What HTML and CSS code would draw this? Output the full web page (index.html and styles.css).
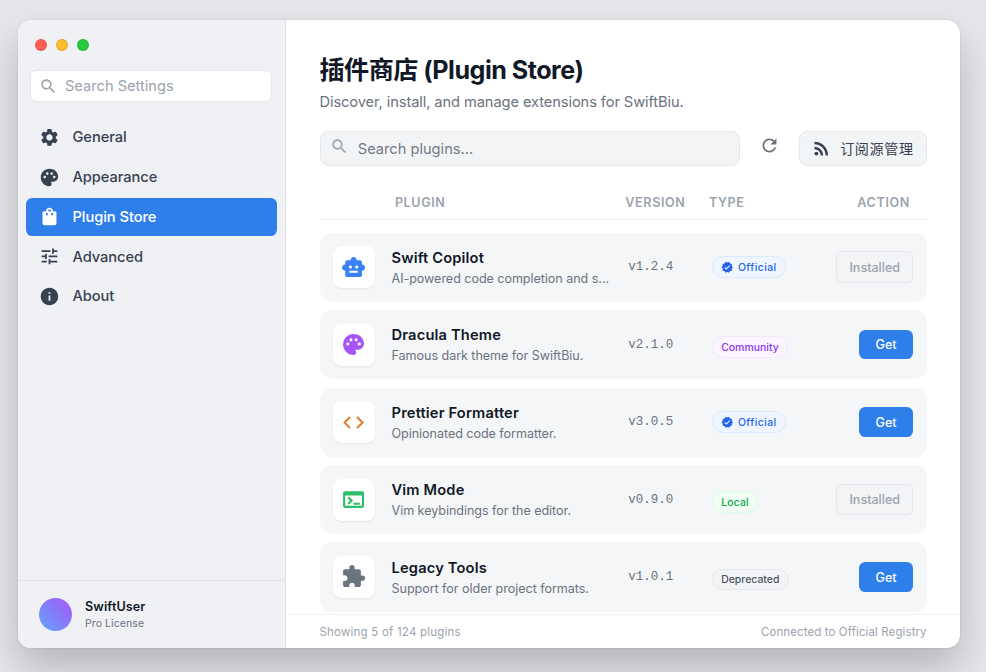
FILE: index.html
```
<!DOCTYPE html>
<html lang="zh-CN">
<head>
    <meta charset="UTF-8">
    <meta name="viewport" content="width=device-width, initial-scale=1.0">
    <title>Plugin Store</title>
    <link rel="stylesheet" href="styles.css">
</head>
<body>
<svg class="sprite">
    <symbol id="i-search" viewBox="0 0 24 24"><path d="M15.5 14h-.79l-.28-.27C15.41 12.59 16 11.11 16 9.5 16 5.91 13.09 3 9.5 3S3 5.91 3 9.5 5.91 16 9.5 16c1.61 0 3.09-.59 4.23-1.57l.27.28v.79l5 4.99L20.49 19l-4.99-5zm-6 0C7.01 14 5 11.99 5 9.5S7.01 5 9.5 5 14 7.01 14 9.5 11.99 14 9.5 14z"/></symbol>
    <symbol id="i-settings" viewBox="0 0 24 24"><path d="M19.14 12.94c.04-.3.06-.61.06-.94 0-.32-.02-.64-.07-.94l2.03-1.58c.18-.14.23-.41.12-.61l-1.92-3.32c-.12-.22-.37-.29-.59-.22l-2.39.96c-.5-.38-1.03-.7-1.62-.94l-.36-2.54c-.04-.24-.24-.41-.48-.41h-3.84c-.24 0-.43.17-.47.41l-.36 2.54c-.59.24-1.13.57-1.62.94l-2.39-.96c-.22-.08-.47 0-.59.22L2.74 8.87c-.12.21-.08.47.12.61l2.03 1.58c-.05.3-.09.63-.09.94s.02.64.07.94l-2.03 1.58c-.18.14-.23.41-.12.61l1.92 3.32c.12.22.37.29.59.22l2.39-.96c.5.38 1.03.7 1.62.94l.36 2.54c.05.24.24.41.48.41h3.84c.24 0 .44-.17.47-.41l.36-2.54c.59-.24 1.13-.56 1.62-.94l2.39.96c.22.08.47 0 .59-.22l1.92-3.32c.12-.22.07-.47-.12-.61l-2.01-1.58zM12 15.6c-1.98 0-3.6-1.62-3.6-3.6s1.62-3.6 3.6-3.6 3.6 1.62 3.6 3.6-1.62 3.6-3.6 3.6z"/></symbol>
    <symbol id="i-palette" viewBox="0 0 24 24"><path d="M12 2C6.49 2 2 6.49 2 12s4.49 10 10 10c1.38 0 2.5-1.12 2.5-2.5 0-.61-.23-1.2-.64-1.67-.08-.1-.13-.21-.13-.33 0-.28.22-.5.5-.5H16c3.31 0 6-2.69 6-6 0-4.96-4.49-9-10-9zm5.5 11c-.83 0-1.5-.67-1.5-1.5s.67-1.5 1.5-1.5 1.5.67 1.5 1.5-.67 1.5-1.5 1.5zm-3-4c-.83 0-1.5-.67-1.5-1.5S13.67 6 14.5 6s1.5.67 1.5 1.5S15.33 9 14.5 9zM5 11.5c0-.83.67-1.5 1.5-1.5s1.5.67 1.5 1.5S7.33 13 6.5 13 5 12.33 5 11.5zm6-4c0 .83-.67 1.5-1.5 1.5S8 8.33 8 7.5 8.67 6 9.5 6s1.5.67 1.5 1.5z"/></symbol>
    <symbol id="i-bag" viewBox="0 0 24 24"><path d="M18 6h-2c0-2.21-1.79-4-4-4S8 3.79 8 6H6c-1.1 0-2 .9-2 2v12c0 1.1.9 2 2 2h12c1.1 0 2-.9 2-2V8c0-1.1-.9-2-2-2zm-8 4c0 .55-.45 1-1 1s-1-.45-1-1V8h2v2zm2-6c1.1 0 2 .9 2 2h-4c0-1.1.9-2 2-2zm4 6c0 .55-.45 1-1 1s-1-.45-1-1V8h2v2z"/></symbol>
    <symbol id="i-tune" viewBox="0 0 24 24"><path d="M3 17v2h6v-2H3zM3 5v2h10V5H3zm10 16v-2h8v-2h-8v-2h-2v6h2zM7 9v2H3v2h4v2h2V9H7zm14 4v-2H11v2h10zm-6-4h2V7h4V5h-4V3h-2v6z"/></symbol>
    <symbol id="i-info" viewBox="0 0 24 24"><path d="M12 2C6.48 2 2 6.48 2 12s4.48 10 10 10 10-4.48 10-10S17.52 2 12 2zm1 15h-2v-6h2v6zm0-8h-2V7h2v2z"/></symbol>
    <symbol id="i-refresh" viewBox="0 0 24 24"><path d="M17.65 6.35C16.2 4.9 14.21 4 12 4c-4.42 0-7.99 3.58-7.99 8s3.57 8 7.99 8c3.73 0 6.84-2.55 7.73-6h-2.08c-.82 2.33-3.04 4-5.65 4-3.31 0-6-2.69-6-6s2.69-6 6-6c1.66 0 3.14.69 4.22 1.78L13 11h7V4l-2.35 2.35z"/></symbol>
    <symbol id="i-rss" viewBox="0 0 24 24"><circle cx="6.18" cy="17.82" r="2.18"/><path d="M4 4.44v2.83c7.03 0 12.73 5.7 12.73 12.73h2.83c0-8.59-6.97-15.56-15.56-15.56zm0 5.66v2.83c3.9 0 7.07 3.17 7.07 7.07h2.83c0-5.47-4.43-9.9-9.9-9.9z"/></symbol>
    <symbol id="i-robot" viewBox="0 0 24 24"><path fill-rule="evenodd" d="M20 9V7c0-1.1-.9-2-2-2h-3c0-1.66-1.34-3-3-3S9 3.34 9 5H6c-1.1 0-2 .9-2 2v2c-1.66 0-3 1.34-3 3s1.34 3 3 3v4c0 1.1.9 2 2 2h12c1.1 0 2-.9 2-2v-4c1.66 0 3-1.34 3-3s-1.34-3-3-3zM7.5 11.5c0-.83.67-1.5 1.5-1.5s1.5.67 1.5 1.5S9.83 13 9 13s-1.5-.67-1.5-1.5zM16 17H8v-2h8v2zm-1-4c-.83 0-1.5-.67-1.5-1.5S14.17 10 15 10s1.5.67 1.5 1.5S15.83 13 15 13z"/></symbol>
    <symbol id="i-verified" viewBox="0 0 24 24"><path d="M23 12l-2.44-2.79.34-3.69-3.61-.82-1.89-3.2L12 2.96 8.6 1.5 6.71 4.69 3.1 5.5l.34 3.7L1 12l2.44 2.79-.34 3.7 3.61.82L8.6 22.5l3.4-1.47 3.4 1.46 1.89-3.19 3.61-.82-.34-3.69L23 12zm-12.91 4.72l-3.8-3.81 1.48-1.48 2.32 2.33 5.85-5.87 1.48 1.48-7.33 7.35z"/></symbol>
    <symbol id="i-code" viewBox="0 0 24 24"><path d="M9.4 16.6L4.8 12l4.6-4.6L8 6l-6 6 6 6 1.4-1.4zm5.2 0l4.6-4.6-4.6-4.6L16 6l6 6-6 6-1.4-1.4z"/></symbol>
    <symbol id="i-terminal" viewBox="0 0 24 24"><path d="M20 4H4c-1.11 0-2 .9-2 2v12c0 1.1.89 2 2 2h16c1.1 0 2-.9 2-2V6c0-1.1-.89-2-2-2zm0 14H4V8h16v10zm-2-1h-6v-2h6v2zM7.5 17l-1.41-1.41L8.67 13l-2.59-2.59L7.5 9l4 4-4 4z"/></symbol>
    <symbol id="i-extension" viewBox="0 0 24 24"><path d="M20.5 11H19V7c0-1.1-.9-2-2-2h-4V3.5C13 2.12 11.88 1 10.5 1S8 2.12 8 3.5V5H4c-1.1 0-1.99.9-1.99 2v3.8H3.5c1.49 0 2.7 1.21 2.7 2.7s-1.21 2.7-2.7 2.7H2V20c0 1.1.9 2 2 2h3.8v-1.5c0-1.49 1.21-2.7 2.7-2.7 1.49 0 2.7 1.21 2.7 2.7V22H17c1.1 0 2-.9 2-2v-4h1.5c1.38 0 2.5-1.12 2.5-2.5S21.88 11 20.5 11z"/></symbol>
</svg>

<div class="window">
    <aside class="sidebar">
        <div class="titlebar">
            <span class="dot red"></span>
            <span class="dot yellow"></span>
            <span class="dot green"></span>
        </div>
        <label class="side-search">
            <svg class="icon"><use href="#i-search"/></svg>
            <input type="text" placeholder="Search Settings">
        </label>
        <nav class="nav">
            <a class="nav-item"><svg class="icon"><use href="#i-settings"/></svg>General</a>
            <a class="nav-item"><svg class="icon"><use href="#i-palette"/></svg>Appearance</a>
            <a class="nav-item active"><svg class="icon"><use href="#i-bag"/></svg>Plugin Store</a>
            <a class="nav-item"><svg class="icon"><use href="#i-tune"/></svg>Advanced</a>
            <a class="nav-item"><svg class="icon"><use href="#i-info"/></svg>About</a>
        </nav>
        <div class="user">
            <div class="avatar"></div>
            <div class="user-text">
                <div class="user-name">SwiftUser</div>
                <div class="user-plan">Pro License</div>
            </div>
        </div>
    </aside>

    <main class="main">
        <header class="header">
            <h1>插件商店 (Plugin Store)</h1>
            <p>Discover, install, and manage extensions for SwiftBiu.</p>
        </header>
        <div class="toolbar">
            <label class="search">
                <svg class="icon"><use href="#i-search"/></svg>
                <input type="text" placeholder="Search plugins...">
            </label>
            <button class="refresh"><svg class="icon"><use href="#i-refresh"/></svg></button>
            <button class="sources"><svg class="icon"><use href="#i-rss"/></svg><span>订阅源管理</span></button>
        </div>

        <div class="table-head">
            <span>Plugin</span>
            <span>Version</span>
            <span>Type</span>
            <span>Action</span>
        </div>

        <div class="list">
            <div class="row">
                <div class="tile blue"><svg class="icon"><use href="#i-robot"/></svg></div>
                <div class="info">
                    <div class="name">Swift Copilot</div>
                    <div class="desc">AI-powered code completion and s...</div>
                </div>
                <div class="version">v1.2.4</div>
                <div class="type"><span class="badge official"><svg class="icon"><use href="#i-verified"/></svg>Official</span></div>
                <button class="btn installed">Installed</button>
            </div>
            <div class="row">
                <div class="tile purple"><svg class="icon"><use href="#i-palette"/></svg></div>
                <div class="info">
                    <div class="name">Dracula Theme</div>
                    <div class="desc">Famous dark theme for SwiftBiu.</div>
                </div>
                <div class="version">v2.1.0</div>
                <div class="type low"><span class="badge community">Community</span></div>
                <button class="btn get">Get</button>
            </div>
            <div class="row">
                <div class="tile orange"><svg class="icon"><use href="#i-code"/></svg></div>
                <div class="info">
                    <div class="name">Prettier Formatter</div>
                    <div class="desc">Opinionated code formatter.</div>
                </div>
                <div class="version">v3.0.5</div>
                <div class="type"><span class="badge official"><svg class="icon"><use href="#i-verified"/></svg>Official</span></div>
                <button class="btn get">Get</button>
            </div>
            <div class="row">
                <div class="tile green-icon"><svg class="icon"><use href="#i-terminal"/></svg></div>
                <div class="info">
                    <div class="name">Vim Mode</div>
                    <div class="desc">Vim keybindings for the editor.</div>
                </div>
                <div class="version">v0.9.0</div>
                <div class="type low"><span class="badge local">Local</span></div>
                <button class="btn installed">Installed</button>
            </div>
            <div class="row">
                <div class="tile gray"><svg class="icon"><use href="#i-extension"/></svg></div>
                <div class="info">
                    <div class="name">Legacy Tools</div>
                    <div class="desc">Support for older project formats.</div>
                </div>
                <div class="version">v1.0.1</div>
                <div class="type low"><span class="badge deprecated">Deprecated</span></div>
                <button class="btn get">Get</button>
            </div>
        </div>

        <footer class="footer">
            <span class="count">Showing 5 of 124 plugins</span>
            <span>Connected to Official Registry</span>
        </footer>
    </main>
</div>
</body>
</html>
```
FILE: styles.css
```
html {
    font-size: 16.75px;
}

* {
    box-sizing: border-box;
}

body {
    margin: 0;
    height: 100vh;
    overflow: hidden;
    padding: 20px 0 0 18px;
    background: #e5e7eb;
    font-family: Inter, "Noto Sans CJK SC", sans-serif;
    color: #111827;
}

button, input {
    font-family: inherit;
    margin: 0;
}

.sprite {
    display: none;
}

.icon {
    display: block;
    flex: none;
    width: 1.25rem;
    height: 1.25rem;
    fill: currentColor;
}

.window {
    display: flex;
    width: 56.25rem;
    height: 37.5rem;
    border-radius: .75rem;
    overflow: hidden;
    background: #fff;
    box-shadow: 0 0 1px rgba(0, 0, 0, .35), 0 20px 40px rgba(0, 0, 0, .22);
}

/* sidebar */
.sidebar {
    width: 16rem;
    flex: none;
    display: flex;
    flex-direction: column;
    background: #f0f1f5;
    border-right: 1px solid #e1e3e8;
}

.titlebar {
    display: flex;
    align-items: center;
    gap: .5rem;
    height: 3rem;
    padding: 0 1rem;
}

.dot {
    width: .75rem;
    height: .75rem;
    border-radius: 50%;
    border: 1px solid rgba(0, 0, 0, .1);
}

.red { background: #ff5f57; }
.yellow { background: #febc2e; }
.green { background: #28c840; }

.side-search {
    display: flex;
    align-items: center;
    gap: .45rem;
    height: 1.875rem;
    margin: 0 .75rem 1rem .72rem;
    padding: 0 .45rem;
    border: 1px solid #e4e6ea;
    border-radius: .375rem;
    background: #fff;
    color: #9ca3af;
}

.side-search .icon, .search .icon {
    width: 1.125rem;
    height: 1.125rem;
}

.side-search input, .search input {
    flex: 1;
    min-width: 0;
    padding: 0;
    border: 0;
    outline: 0;
    background: none;
    font-size: .875rem;
}

.side-search input::placeholder {
    color: #9ca3af;
}

.nav {
    flex: 1;
    display: flex;
    flex-direction: column;
    gap: .125rem;
    padding: 0 .5rem;
}

.nav-item {
    display: flex;
    align-items: center;
    gap: .75rem;
    height: 2.25rem;
    padding: 0 .75rem;
    border-radius: .375rem;
    font-size: .875rem;
    font-weight: 500;
    letter-spacing: -.003em;
    color: #374151;
}

.nav-item.active {
    background: #2f7feb;
    color: #fff;
}

.user {
    display: flex;
    align-items: center;
    gap: .75rem;
    height: 4.0625rem;
    padding: 0 1.25rem;
    border-top: 1px solid #e1e3e8;
}

.avatar {
    width: 2rem;
    height: 2rem;
    border-radius: 50%;
    background: linear-gradient(45deg, #60a5fa, #a855f7);
}

.user-text {
    padding-top: 2px;
}

.user-name {
    font-size: .75rem;
    line-height: 1rem;
    font-weight: 600;
    letter-spacing: .01em;
}

.user-plan {
    font-size: .625rem;
    line-height: .9375rem;
    letter-spacing: .01em;
    color: #6b7280;
}

/* main */
.main {
    flex: 1;
    min-width: 0;
    display: flex;
    flex-direction: column;
}

.header {
    padding: 2rem 2rem 0;
}

.header h1 {
    margin: 0 0 .3rem;
    font-size: 1.5rem;
    line-height: 2rem;
    font-weight: 700;
    letter-spacing: -.02em;
}

.header p {
    margin: 0;
    font-size: .875rem;
    line-height: 1.25rem;
    letter-spacing: -.006em;
    color: #6b7280;
}

.toolbar {
    display: flex;
    margin: 1.07rem 2rem 0;
}

.search {
    flex: 1;
    display: flex;
    align-items: center;
    gap: .55rem;
    height: 2.125rem;
    padding: 0 .55rem;
    border: 1px solid #e5e7eb;
    border-radius: .5rem;
    background: #f3f4f6;
    color: #9ca3af;
}

.search .icon {
    margin-bottom: .25rem;
}

.search input::placeholder {
    color: #757b87;
}

.refresh {
    width: 3.53rem;
    padding: 0 0 .375rem;
    border: 0;
    background: none;
    color: #6b7280;
}

.refresh .icon {
    margin: 0 auto;
}

.sources {
    display: flex;
    align-items: center;
    gap: .5rem;
    height: 2.125rem;
    padding: 0 .72rem 0 .64rem;
    border: 1px solid #e5e7eb;
    border-radius: .5rem;
    background: #f3f4f6;
    font-size: .84rem;
    font-weight: 400;
    letter-spacing: .045em;
    color: #374151;
}

.sources span {
    padding-bottom: 2px;
}

.table-head, .row {
    display: grid;
    align-items: center;
}

.table-head {
    grid-template-columns: 13.76rem 4.99rem 1fr auto;
    height: 2.25rem;
    margin: .97rem 2rem 0;
    padding: 2px 1rem 0 4.5rem;
    border-bottom: 1px solid #f0f1f4;
    font-size: .75rem;
    font-weight: 600;
    letter-spacing: .05em;
    text-transform: uppercase;
    color: #9ca3af;
}

.list {
    flex: 1;
    min-height: 0;
    overflow: hidden;
    display: flex;
    flex-direction: column;
    gap: .5rem;
    padding: .73rem 2rem 0;
}

.row {
    grid-template-columns: 3.5rem 14.13rem 4.99rem 1fr auto;
    flex: none;
    height: 4.125rem;
    padding: 0 .8rem;
    border-radius: .75rem;
    background: #f5f6f8;
}

.tile {
    display: flex;
    align-items: center;
    justify-content: center;
    width: 2.5rem;
    height: 2.5rem;
    border-radius: .5rem;
    background: #fff;
    box-shadow: 0 1px 2px rgba(0, 0, 0, .07);
}

.tile .icon {
    width: 1.5rem;
    height: 1.5rem;
}

.blue { color: #3b82f6; }
.purple { color: #a855f7; }
.orange { color: #ea7a2f; }
.green-icon { color: #2fbe68; }
.gray { color: #6b7280; }

.info {
    padding-top: 2.5px;
}

.name {
    font-size: .875rem;
    line-height: 1.25rem;
    font-weight: 600;
    letter-spacing: .012em;
}

.desc {
    font-size: .75rem;
    line-height: 1.2rem;
    letter-spacing: -.003em;
    color: #6b7280;
    white-space: nowrap;
}

.version {
    font-family: "Liberation Mono", monospace;
    font-size: .75rem;
    color: #6b7280;
}

.type {
    display: flex;
}

.type.low {
    padding-top: .3rem;
}

.badge {
    display: flex;
    align-items: center;
    gap: .25rem;
    height: 1.3rem;
    padding: 0 .5rem;
    border: 1px solid;
    border-radius: 1rem;
    font-size: .625rem;
    font-weight: 500;
}

.badge .icon {
    width: .75rem;
    height: .75rem;
}

.official { background: #eff6ff; border-color: #dbeafe; color: #2563eb; letter-spacing: .04em; }
.community { background: #faf5ff; border-color: #f3e8ff; color: #9333ea; }
.local { background: #f0fdf4; border-color: #dcfce7; color: #16a34a; letter-spacing: .015em; }
.deprecated { background: #f3f4f6; border-color: #e5e7eb; color: #4b5563; }

.btn {
    justify-self: end;
    padding: 0 1rem;
    height: 1.75rem;
    border: 0;
    border-radius: .375rem;
    font-size: .75rem;
    font-weight: 500;
}

.get {
    background: #2f7feb;
    color: #fff;
}

.installed {
    height: 1.875rem;
    padding: 0 .73rem;
    border: 1px solid #e5e7eb;
    border-radius: .3rem;
    background: #f3f4f6;
    color: #9ca3af;
}

.footer {
    display: flex;
    align-items: center;
    justify-content: space-between;
    height: 2.0625rem;
    padding: 2px 2rem 0;
    border-top: 1px solid #f0f1f4;
    font-size: .6875rem;
    letter-spacing: .009em;
    color: #9ca3af;
}

.count {
    letter-spacing: .018em;
}
```
